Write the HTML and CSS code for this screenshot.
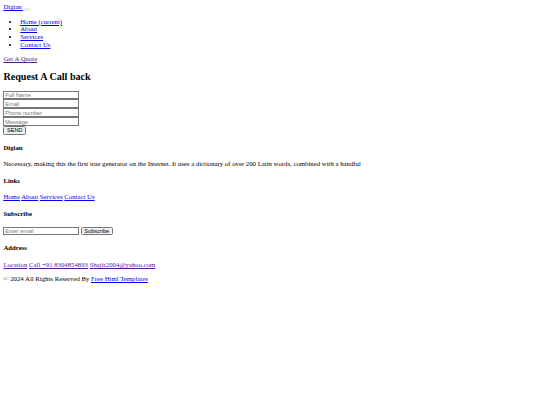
FILE: index.html
```html
<!DOCTYPE html>
<html lang="en">
<head>
<meta charset="utf-8">
<title>Digian</title>
<link rel="stylesheet" href="styles.css">
</head>
<body>
<header class="site-header">
  <nav class="navbar">
    <a class="brand" href="#">Digian <span class="brand-space"></span></a><button class="toggler" type="button"></button>
    <ul class="nav-list">
      <li><a href="#">Home (current)</a></li>
      <li><a href="#">About</a></li>
      <li><a href="#">Services</a></li>
      <li><a href="#">Contact Us</a></li>
    </ul>
    <a class="quote visited" href="#">Get A Quote</a>
  </nav>
</header>
<section class="contact">
  <h2 class="contact-title">Request A Call back</h2>
  <form>
    <div><input type="text" placeholder="Full Name"></div>
    <div><input type="text" placeholder="Email"></div>
    <div><input type="text" placeholder="Phone number"></div>
    <div><input type="text" placeholder="Message"></div>
    <button type="button">SEND</button>
  </form>
</section>
<footer class="footer">
  <h4>Digian</h4>
  <p>Necessary, making this the first true generator on the Internet. It uses a dictionary of over 200 Latin words, combined with a handful</p>
  <h4>Links</h4>
  <p><a href="#">Home</a> <a href="#">About</a> <a href="#">Services</a> <a href="#">Contact Us</a></p>
  <h4>Subscribe</h4>
  <form><input type="text" placeholder="Enter email"> <button type="button">Subscribe</button></form>
  <h4>Address</h4>
  <p><a class="visited" href="#">Location</a> <a class="visited" href="#">Call +91 8304854893</a> <a class="visited" href="#">Shajir2004@yahoo.com</a></p>
  <p>© 2024 All Rights Reserved By <a href="#">Free Html Templates</a></p>
</footer>
</body>
</html>
```
FILE: styles.css
```css
html {
  zoom: 0.421875;
}
body {
  font-family: "Liberation Serif", "Times New Roman", serif;
  line-height: 18px;
}
.contact-title {
  line-height: 27px;
}
.visited {
  color: #551a8b;
}
.brand-space {
  display: inline-block;
  width: 0;
}
```
